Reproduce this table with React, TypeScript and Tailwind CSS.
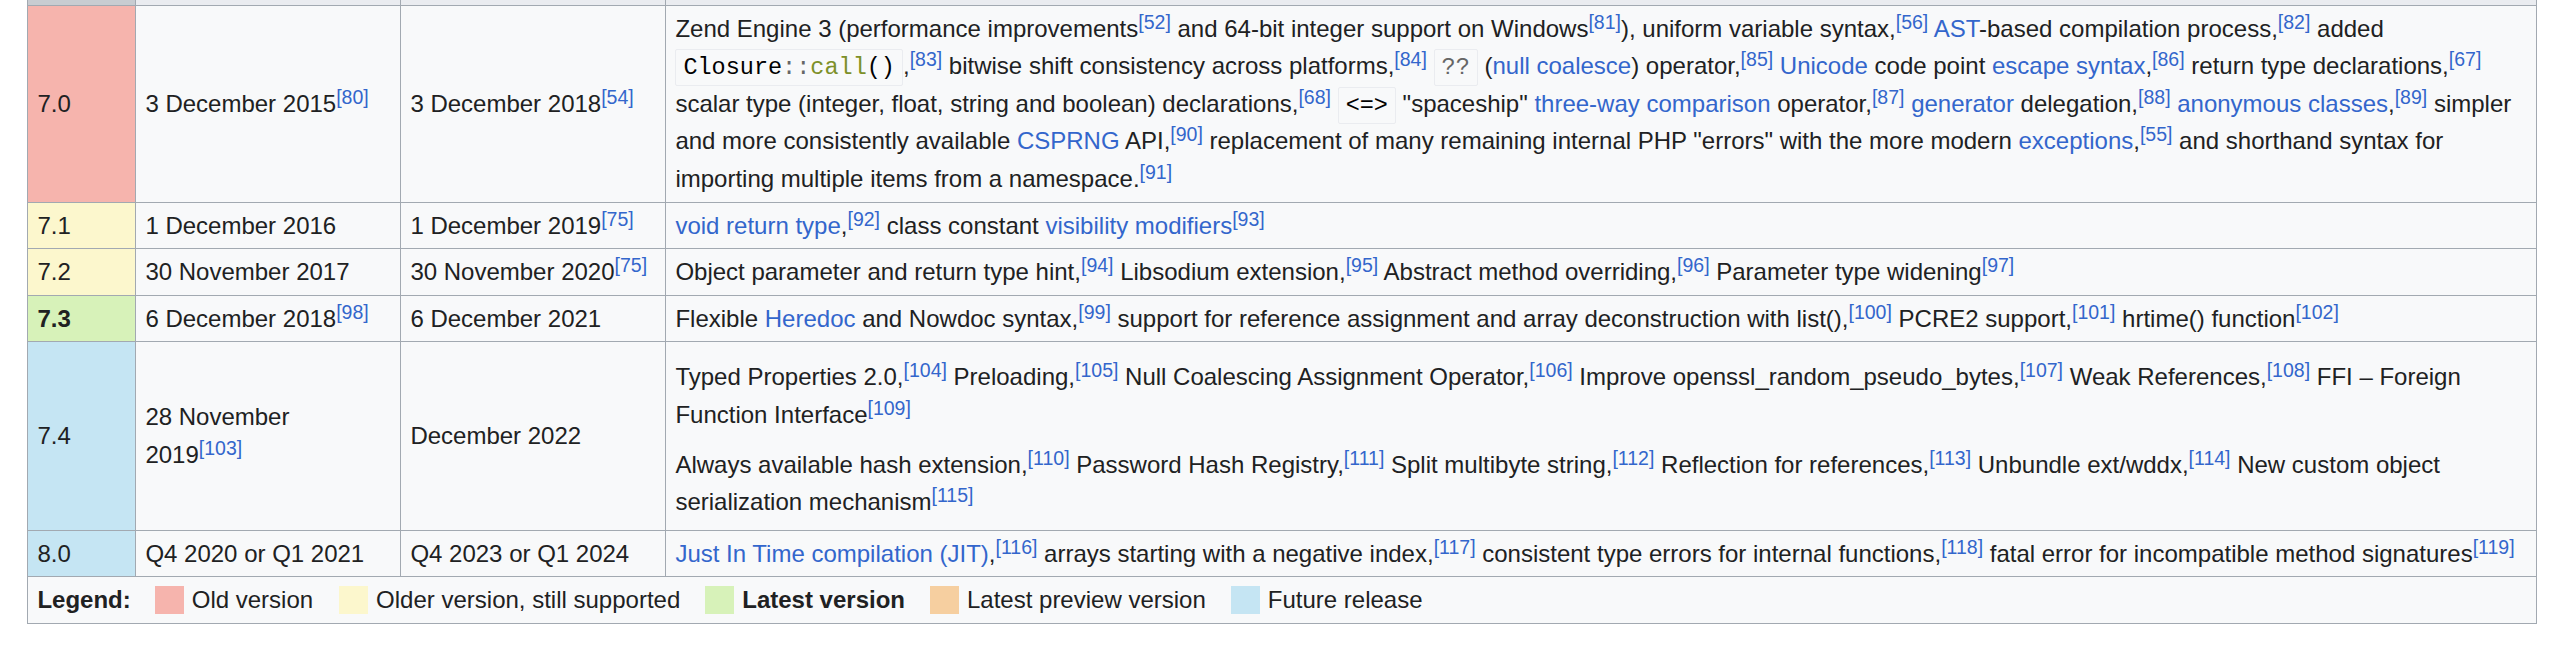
import React from "react";

function Ref({ n }: { n: number }) {
  return (
    <sup className="text-[19.5px] leading-none text-[#3366cc] top-[-8px]">[{n}]</sup>
  );
}

function A({ children }: { children: React.ReactNode }) {
  return <span className="text-[#3366cc]">{children}</span>;
}

function Code({ children }: { children: React.ReactNode }) {
  return (
    <code className="whitespace-nowrap font-['Liberation_Mono',monospace] text-[23.5px] leading-none bg-[#f8f9fa] border border-[#eaecf0] rounded-[2px] px-[7px] py-[4px] text-[#000000]">
      {children}
    </code>
  );
}

const td = "border border-[#a2a9b1] px-[9.4px] py-[4px] align-middle text-left";

function Swatch({ color }: { color: string }) {
  return <span className={"inline-block w-[29px] h-[28px] shrink-0 " + color} />;
}

export default function App() {
  return (
    <div className="min-h-[648px] bg-white pl-[27px] font-['Liberation_Sans',Arial,sans-serif] text-[24px] leading-[37.6px] text-[#202122]">
      <table className="-mt-[42px] w-[2510px] table-fixed border-collapse border border-[#a2a9b1] bg-[#f8f9fa]">
        <colgroup>
          <col className="w-[108px]" />
          <col className="w-[265px]" />
          <col className="w-[265px]" />
          <col />
        </colgroup>
        <thead>
          <tr>
            <th className={td + " bg-[#c8ccd1] font-bold text-center"}>Version</th>
            <th className={td + " bg-[#eaecf0] font-bold text-center"}>Release date</th>
            <th className={td + " bg-[#eaecf0] font-bold text-center"}>Supported until</th>
            <th className={td + " bg-[#eaecf0] font-bold text-center"}>Notes</th>
          </tr>
        </thead>
        <tbody>
          <tr>
            <td className={td + " bg-[#f6b4ad]"}>7.0</td>
            <td className={td}>3 December 2015<Ref n={80} /></td>
            <td className={td}>3 December 2018<Ref n={54} /></td>
            <td className={td}>
              Zend Engine 3 (performance improvements<Ref n={52} /> and 64-bit integer support on Windows<Ref n={81} />), uniform variable syntax,<Ref n={56} /> <A>AST</A>-based compilation process,<Ref n={82} /> added{" "}
              <Code>
                <span className="text-[#000000]">Closure</span>
                <span className="text-[#666666]">::</span>
                <span className="text-[#7d9029]">call</span>
                <span className="text-[#000000]">()</span>
              </Code>
              ,<Ref n={83} /> bitwise shift consistency across platforms,<Ref n={84} />{" "}
              <Code>
                <span className="text-[#666666]">??</span>
              </Code>{" "}
              (<A>null coalesce</A>) operator,<Ref n={85} /> <A>Unicode</A> code point <A>escape syntax</A>,<Ref n={86} /> return type declarations,<Ref n={67} /> scalar type (integer, float, string and boolean) declarations,<Ref n={68} />{" "}
              <Code>&lt;=&gt;</Code> "spaceship" <A>three-way comparison</A> operator,<Ref n={87} /> <A>generator</A> delegation,<Ref n={88} /> <A>anonymous classes</A>,<Ref n={89} /> simpler and more consistently available <A>CSPRNG</A> API,<Ref n={90} /> replacement of many remaining internal PHP "errors" with the more modern <A>exceptions</A>,<Ref n={55} /> and shorthand syntax for importing multiple items from a namespace.<Ref n={91} />
            </td>
          </tr>
          <tr>
            <td className={td + " bg-[#fcf7cd]"}>7.1</td>
            <td className={td}>1 December 2016</td>
            <td className={td}>1 December 2019<Ref n={75} /></td>
            <td className={td}>
              <A>void return type</A>,<Ref n={92} /> class constant <A>visibility modifiers</A><Ref n={93} />
            </td>
          </tr>
          <tr>
            <td className={td + " bg-[#fcf7cd]"}>7.2</td>
            <td className={td}>30 November 2017</td>
            <td className={td}>30 November 2020<Ref n={75} /></td>
            <td className={td}>
              Object parameter and return type hint,<Ref n={94} /> Libsodium extension,<Ref n={95} /> Abstract method overriding,<Ref n={96} /> Parameter type widening<Ref n={97} />
            </td>
          </tr>
          <tr>
            <td className={td + " bg-[#d7f2b9] font-bold"}>7.3</td>
            <td className={td}>6 December 2018<Ref n={98} /></td>
            <td className={td}>6 December 2021</td>
            <td className={td}>
              Flexible <A>Heredoc</A> and Nowdoc syntax,<Ref n={99} /> support for reference assignment and array deconstruction with list(),<Ref n={100} /> PCRE2 support,<Ref n={101} /> hrtime() function<Ref n={102} />
            </td>
          </tr>
          <tr>
            <td className={td + " bg-[#c5e5f3]"}>7.4</td>
            <td className={td}>
              28 November
              <br />
              2019<Ref n={103} />
            </td>
            <td className={td}>December 2022</td>
            <td className={td}>
              <p className="mt-[12px]">
                Typed Properties 2.0,<Ref n={104} /> Preloading,<Ref n={105} /> Null Coalescing Assignment Operator,<Ref n={106} /> Improve openssl_random_pseudo_bytes,<Ref n={107} /> Weak References,<Ref n={108} /> FFI – Foreign Function Interface<Ref n={109} />
              </p>
              <p className="mt-[12px] mb-[5px]">
                Always available hash extension,<Ref n={110} /> Password Hash Registry,<Ref n={111} /> Split multibyte string,<Ref n={112} /> Reflection for references,<Ref n={113} /> Unbundle ext/wddx,<Ref n={114} /> New custom object serialization mechanism<Ref n={115} />
              </p>
            </td>
          </tr>
          <tr>
            <td className={td + " bg-[#c5e5f3]"}>8.0</td>
            <td className={td}>Q4 2020 or Q1 2021</td>
            <td className={td}>Q4 2023 or Q1 2024</td>
            <td className={td}>
              <A>Just In Time compilation (JIT)</A>,<Ref n={116} /> arrays starting with a negative index,<Ref n={117} /> consistent type errors for internal functions,<Ref n={118} /> fatal error for incompatible method signatures<Ref n={119} />
            </td>
          </tr>
          <tr>
            <td className={td} colSpan={4}>
              <div className="flex items-center h-[37.6px]">
                <span className="font-bold">Legend:</span>
                <span className="ml-[24px] flex items-center">
                  <Swatch color="bg-[#f6b4ad]" />
                  <span className="ml-[8px]">Old version</span>
                </span>
                <span className="ml-[26px] flex items-center">
                  <Swatch color="bg-[#fcf7cd]" />
                  <span className="ml-[8px]">Older version, still supported</span>
                </span>
                <span className="ml-[25px] flex items-center">
                  <Swatch color="bg-[#d7f2b9]" />
                  <span className="ml-[8px] font-bold">Latest version</span>
                </span>
                <span className="ml-[25px] flex items-center">
                  <Swatch color="bg-[#f6cfa0]" />
                  <span className="ml-[8px]">Latest preview version</span>
                </span>
                <span className="ml-[25px] flex items-center">
                  <Swatch color="bg-[#c5e5f3]" />
                  <span className="ml-[8px]">Future release</span>
                </span>
              </div>
            </td>
          </tr>
        </tbody>
      </table>
    </div>
  );
}
